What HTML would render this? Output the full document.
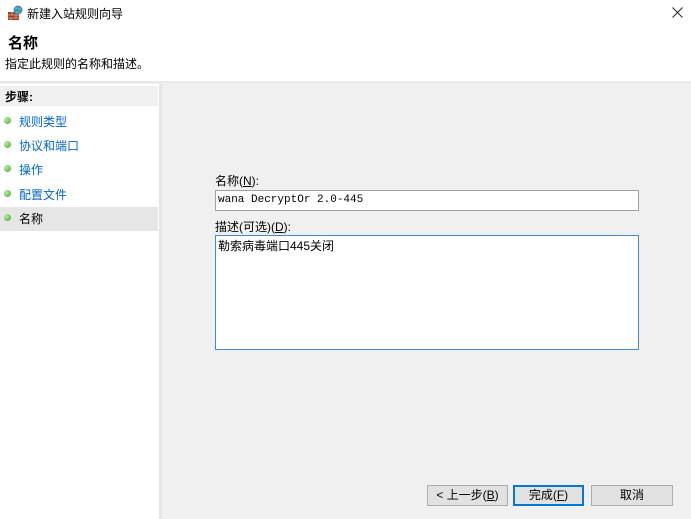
<!DOCTYPE html><html><head><meta charset="utf-8"><style>
body{margin:0;width:691px;height:519px;background:#f0f0f0;font-family:"Liberation Sans","Noto Sans CJK SC",sans-serif;font-size:12px;position:relative;overflow:hidden;color:#000}
.a{position:absolute}
.top{left:0;top:0;width:691px;height:81px;background:#fff}
.btn{position:absolute;height:19px;background:#e1e1e1;border:1px solid #adadad;text-align:center;line-height:19px;font-size:12px}
.dot{position:absolute;left:4px;width:7px;height:7px;border-radius:50%;background:radial-gradient(circle at 35% 35%,#b8f0a0,#3aa52a)}
.st{position:absolute;left:19px;color:#0066cc;font-size:12px}
</style></head><body>
<div class="a top"></div>
<svg class="a" style="left:7px;top:5px" width="16" height="16"><rect x="1" y="7" width="11" height="8" fill="#a0402a"/><path d="M1 10h11M1 13h11M5 7v3M9 10v3M4 13v2" stroke="#e0b090" stroke-width="0.8"/><circle cx="11" cy="5" r="4.5" fill="#3a8fd8"/><path d="M8 4q3-2 6 1M9 7q2 1 4-1" stroke="#7cc050" fill="none"/></svg>
<div class="a" style="left:27px;top:5px;font-size:12px">新建入站规则向导</div>
<svg class="a" style="left:672px;top:7px" width="11" height="11"><path d="M0.5 0.5L10.5 10.5M10.5 0.5L0.5 10.5" stroke="#222" stroke-width="1"/></svg>
<div class="a" style="left:8px;top:32px;font-size:15px;font-weight:bold">名称</div>
<div class="a" style="left:5px;top:55px;font-size:12px">指定此规则的名称和描述。</div>
<div class="a" style="left:0;top:81px;width:691px;height:2px;background:#e8e8e8"></div>
<div class="a" style="left:0;top:84px;width:159px;height:435px;background:#fff"></div>
<div class="a" style="left:0;top:86px;width:158px;height:20px;background:#f0f0f0"></div>
<div class="a" style="left:159px;top:84px;width:3px;height:435px;background:#e6e6e6"></div>
<div class="a" style="left:5px;top:88px;font-weight:bold">步骤:</div>
<div class="a" style="left:0;top:207px;width:158px;height:24px;background:#e6e6e6"></div>
<div class="dot" style="top:117px"></div><div class="st" style="top:113px">规则类型</div>
<div class="dot" style="top:141px"></div><div class="st" style="top:137px">协议和端口</div>
<div class="dot" style="top:165px"></div><div class="st" style="top:161px">操作</div>
<div class="dot" style="top:190px"></div><div class="st" style="top:186px">配置文件</div>
<div class="dot" style="top:214px"></div><div class="st" style="top:210px;color:#000">名称</div>
<div class="a" style="left:215px;top:172px">名称(<u>N</u>):</div>
<div class="a" style="left:215px;top:190px;background:#fff;border:1px solid #a0a0a0;font-family:'Liberation Mono',monospace;font-size:11px;line-height:19px;padding-left:2px;box-sizing:border-box;width:424px;height:21px">wana DecryptOr 2.0-445</div>
<div class="a" style="left:215px;top:218px">描述(可选)(<u>D</u>):</div>
<div class="a" style="left:215px;top:235px;width:424px;height:115px;box-sizing:border-box;background:#fff;border:1px solid #3c8ce0;padding:1px 2px">勒索病毒端口445关闭</div>
<div class="btn" style="left:427px;top:485px;width:79px">&lt; 上一步(<u>B</u>)</div>
<div class="btn" style="left:513px;top:485px;width:67px;border:2px solid #0078d7;height:17px;line-height:17px">完成(<u>F</u>)</div>
<div class="btn" style="left:591px;top:485px;width:80px">取消</div>
</body></html>
